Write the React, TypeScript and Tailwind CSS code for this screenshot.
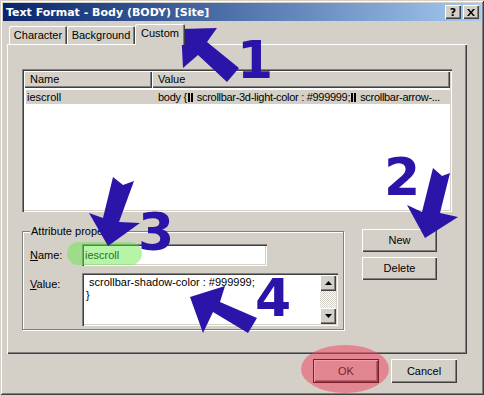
import React from 'react';

const ui = { fontFamily: '"Liberation Sans", Arial, sans-serif' };
const big = { fontFamily: '"DejaVu Sans", Verdana, sans-serif' };

const raised =
  'bg-[#d4d0c8] shadow-[inset_1px_1px_0_#fff,inset_-1px_-1px_0_#404040,inset_-2px_-2px_0_#808080]';
const sunken =
  'shadow-[inset_1px_1px_0_#808080,inset_2px_2px_0_#404040,inset_-1px_-1px_0_#fff,inset_-2px_-2px_0_#d4d0c8]';

function Bars() {
  // line-break markers shown in the list
  return (
    <span className="inline-flex gap-[1px] items-center ml-[1px] mr-[4px] align-[-1px]">
      <span className="w-[2px] h-[9px] bg-black" />
      <span className="w-[2px] h-[9px] bg-black" />
    </span>
  );
}

function Arrows() {
  return (
    <svg className="absolute left-0 top-0 pointer-events-none" width="484" height="395">
      <g fill="#2b14a8">
        <polygon points="181,29 217,28 207,42 239,68 227,82 198,55 183,68" />
        <polygon points="425,238 407,205 422,212 433,168 442,176 450,173 440,213 458,217" />
        <polygon points="108,246 89,213 103,218 113,177 123,185 134,181 119,222 140,223" />
        <polygon points="190,297 225,286 220,302 257,318 248,333 213,312 203,333" />
      </g>
    </svg>
  );
}

export default function App() {
  return (
    <div
      className="relative w-[484px] h-[395px] bg-[#d4d0c8] p-[3px] text-[11px] text-black overflow-hidden shadow-[inset_1px_1px_0_#d4d0c8,inset_-1px_-1px_0_#404040,inset_2px_2px_0_#fff,inset_-2px_-2px_0_#808080]"
      style={ui}
    >
      {/* title bar */}
      <div className="h-[18px] flex items-center justify-between bg-gradient-to-r from-[#0a246a] to-[#a6caf0] pl-[3px] pr-[2px]">
        <span className="text-white font-bold text-[11px] leading-none" style={big}>
          Text Format - Body (BODY) [Site]
        </span>
        <div className="flex gap-[2px]">
          <div className={`w-[16px] h-[14px] ${raised} flex items-center justify-center font-bold text-[11px] leading-none`} style={big}>?</div>
          <div className={`w-[16px] h-[14px] ${raised} flex items-center justify-center`}>
            <svg width="8" height="7" viewBox="0 0 8 7">
              <path d="M0 0h2l2 2.5L6 0h2L5 3.5 8 7H6L4 4.5 2 7H0l3-3.5z" fill="#000" />
            </svg>
          </div>
        </div>
      </div>

      {/* tabs */}
      <div className="ml-[4px] mt-[3px]">
        <div className="flex items-end h-[20px] pl-[2px] relative z-10">
          <div className="w-[58px] h-[18px] flex items-center justify-center rounded-t-[2px] shadow-[inset_1px_1px_0_#fff,inset_-1px_0_0_#404040,inset_-2px_0_0_#808080]">
            Character
          </div>
          <div className="w-[68px] h-[18px] flex items-center justify-center rounded-t-[2px] shadow-[inset_1px_1px_0_#fff,inset_-1px_0_0_#404040,inset_-2px_0_0_#808080]">
            Background
          </div>
          <div className="w-[50px] h-[21px] -mb-[1px] bg-[#d4d0c8] flex items-center justify-center pb-[2px] rounded-t-[2px] shadow-[inset_1px_1px_0_#fff,inset_-1px_0_0_#404040,inset_-2px_0_0_#808080]">
            Custom
          </div>
        </div>

        {/* tab panel */}
        <div className="w-[460px] h-[310px] pl-[15px] pt-[25px] shadow-[inset_1px_1px_0_#fff,inset_-1px_-1px_0_#404040,inset_-2px_-2px_0_#808080]">
          {/* list view */}
          <div className={`w-[430px] h-[143px] bg-white p-[2px] ${sunken}`}>
            <div className="flex h-[17px]">
              <div className={`w-[128px] ${raised} pl-[6px] flex items-center`}>Name</div>
              <div className={`w-[298px] ${raised} pl-[6px] flex items-center`}>Value</div>
            </div>
            <div className="mt-[2px] ml-[2px] w-[424px] h-[14px] bg-[#d4d0c8] flex items-center whitespace-nowrap overflow-hidden">
              <span className="w-[132px] shrink-0 pl-[1px]">iescroll</span>
              <span className="flex items-center tracking-[-0.3px]">
                body {'{'}
                <Bars />
                scrollbar-3d-light-color : #999999;
                <Bars />
                scrollbar-arrow-...
              </span>
            </div>
          </div>

          <div className="flex mt-[13px]">
            {/* attribute properties group */}
            <div className="relative w-[322px] h-[105px] pt-[6px]">
              <div className="h-full border border-[#808080] shadow-[inset_1px_1px_0_#fff,1px_1px_0_#fff] pl-[7px] pt-[12px]">
                <div className="flex items-center h-[22px]">
                  <span className="w-[52px]"><u>N</u>ame:</span>
                  <div className={`w-[185px] h-[22px] bg-white ${sunken} flex items-center pl-[3px]`}>iescroll</div>
                </div>
                <div className="flex mt-[7px]">
                  <span className="w-[52px] pt-[3px]"><u>V</u>alue:</span>
                  <div className={`w-[256px] h-[53px] bg-white ${sunken} p-[2px] flex`}>
                    <div className="flex-1 leading-[13px] pl-[2px] pt-[1px]">
                      <div>&nbsp;scrollbar-shadow-color : #999999;</div>
                      <div>{'}'}</div>
                    </div>
                    <div className="w-[16px] flex flex-col">
                      <div className={`h-[16px] ${raised} flex items-center justify-center`}>
                        <svg width="7" height="4"><path d="M3.5 0L7 4H0z" fill="#000" /></svg>
                      </div>
                      <div className="flex-1 bg-[repeating-conic-gradient(#d4d0c8_0_25%,#fff_0_50%)] bg-[length:2px_2px]" />
                      <div className={`h-[16px] ${raised} flex items-center justify-center`}>
                        <svg width="7" height="4"><path d="M0 0h7L3.5 4z" fill="#000" /></svg>
                      </div>
                    </div>
                  </div>
                </div>
              </div>
              <span className="absolute left-[8px] top-0 bg-[#d4d0c8] px-[1px] leading-[12px]">Attribute properties</span>
            </div>

            {/* side buttons */}
            <div className="ml-[18px] pt-[4px] flex flex-col gap-[5px]">
              <div className={`w-[75px] h-[23px] ${raised} flex items-center justify-center`}>New</div>
              <div className={`w-[75px] h-[23px] ${raised} flex items-center justify-center`}>Delete</div>
            </div>
          </div>
        </div>
      </div>

      {/* bottom buttons */}
      <div className="flex justify-end gap-[12px] mt-[5px] pr-[24px]">
        <div className="w-[66px] h-[24px] border border-black">
          <div className={`w-full h-full ${raised} flex items-center justify-center`}>OK</div>
        </div>
        <div className={`w-[66px] h-[24px] ${raised} flex items-center justify-center`}>Cancel</div>
      </div>

      {/* annotations */}
      <div className="absolute left-[67px] top-[242px] w-[75px] h-[23px] rounded-full bg-[rgba(93,233,62,0.45)]" />
      <div className="absolute left-[301px] top-[345px] w-[88px] h-[48px] rounded-[50%] bg-[rgba(240,60,90,0.5)]" />
      <Arrows />
      <span className="absolute left-[237px] top-[34px] text-[52px] font-bold leading-none text-[#2b14a8]" style={big}>1</span>
      <span className="absolute left-[384px] top-[151px] text-[52px] font-bold leading-none text-[#2b14a8]" style={big}>2</span>
      <span className="absolute left-[138px] top-[206px] text-[52px] font-bold leading-none text-[#2b14a8]" style={big}>3</span>
      <span className="absolute left-[255px] top-[272px] text-[52px] font-bold leading-none text-[#2b14a8]" style={big}>4</span>
    </div>
  );
}
